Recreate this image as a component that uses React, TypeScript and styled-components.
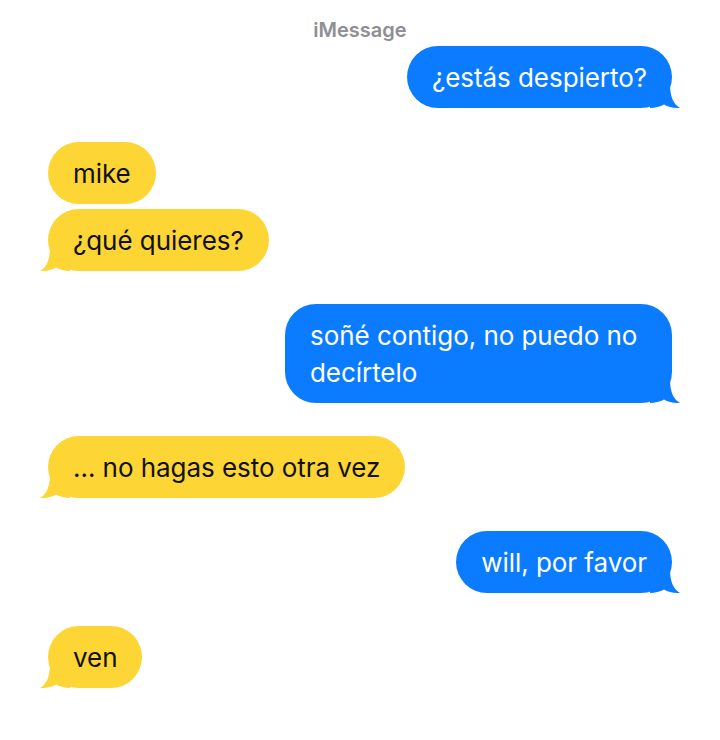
import React from "react";
import styled, { createGlobalStyle } from "styled-components";

const GlobalStyle = createGlobalStyle`
  html, body {
    margin: 0;
    padding: 0;
    background: #ffffff;
  }
  body {
    font-family: Inter, "Noto Sans", "Liberation Sans", sans-serif;
  }
`;

const BLUE = "#0b7cff";
const YELLOW = "#fdd535";

const Page = styled.div`
  width: 720px;
  min-height: 740px;
  box-sizing: border-box;
  padding: 18px 48px 0;
  background: #ffffff;
`;

const Header = styled.div`
  text-align: center;
  font-size: 20px;
  line-height: 24px;
  font-weight: 600;
  color: #8e8e93;
  margin-bottom: 4px;
`;

const Thread = styled.div`
  display: flex;
  flex-direction: column;
`;

const Row = styled.div<{ $mine: boolean; $gap: number }>`
  display: flex;
  justify-content: ${(p) => (p.$mine ? "flex-end" : "flex-start")};
  margin-top: ${(p) => p.$gap}px;
`;

const Bubble = styled.div<{ $mine: boolean }>`
  position: relative;
  max-width: 387px;
  box-sizing: border-box;
  padding: 13px 25px 12px;
  border-radius: 31px;
  font-size: 26px;
  line-height: 37px;
  letter-spacing: -0.05px;
  background: ${(p) => (p.$mine ? BLUE : YELLOW)};
  color: ${(p) => (p.$mine ? "#ffffff" : "#111111")};
`;

const Tail = styled.svg<{ $mine: boolean }>`
  position: absolute;
  bottom: 0;
  width: 32px;
  height: 24px;
  ${(p) => (p.$mine ? "right: -10px;" : "left: -10px; transform: scaleX(-1);")}
`;

const BubbleTail = ({ mine }: { mine: boolean }) => (
  <Tail $mine={mine} viewBox="0 0 32 24">
    <path
      d="M0 0 L20 0 C20 12 23 20 30 24 C24 24.2 18 23 14 20.5 C10 22.6 5 24 0 24 Z"
      fill={mine ? BLUE : YELLOW}
    />
  </Tail>
);

type Message = {
  text: React.ReactNode;
  mine: boolean;
  gap: number;
  tail: boolean;
};

const messages: Message[] = [
  { text: "¿estás despierto?", mine: true, gap: 0, tail: true },
  { text: "mike", mine: false, gap: 34, tail: false },
  { text: "¿qué quieres?", mine: false, gap: 5, tail: true },
  { text: "soñé contigo, no puedo no decírtelo", mine: true, gap: 33, tail: true },
  { text: "... no hagas esto otra vez", mine: false, gap: 33, tail: true },
  { text: "will, por favor", mine: true, gap: 33, tail: true },
  { text: "ven", mine: false, gap: 33, tail: true },
];

const App = () => {
  return (
    <>
      <GlobalStyle />
      <Page>
        <Header>iMessage</Header>
        <Thread>
          {messages.map((m, i) => (
            <Row key={i} $mine={m.mine} $gap={m.gap}>
              <Bubble $mine={m.mine}>
                {m.tail && <BubbleTail mine={m.mine} />}
                {m.text}
              </Bubble>
            </Row>
          ))}
        </Thread>
      </Page>
    </>
  );
};

export default App;
